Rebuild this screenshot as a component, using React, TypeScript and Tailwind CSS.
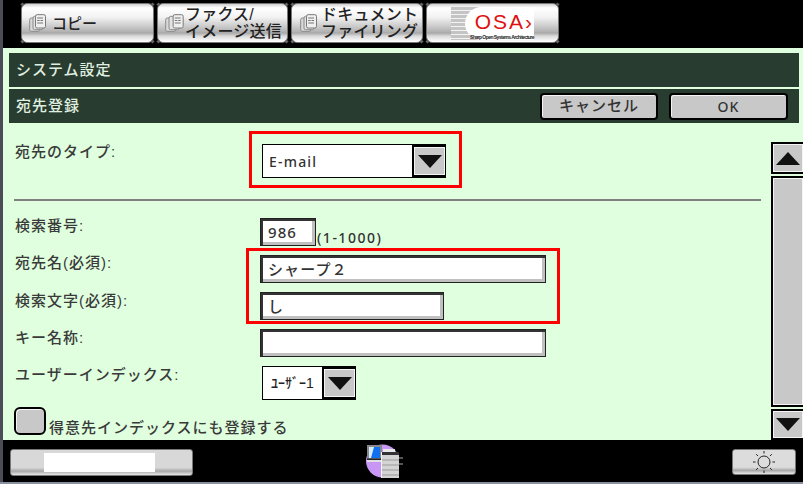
const font = "[font-family:'Liberation_Sans','Noto_Sans_CJK_JP',sans-serif]"

function DocIcon({ wide }: { wide?: boolean }) {
  return (
    <svg width="20" height="20" viewBox="0 0 24 24" className="shrink-0">
      <rect x="2" y="6" width="12" height="16" rx="2" fill="#d8d8d8" stroke="#8a8a8a" strokeWidth="1.2" />
      <rect x="6" y="4" width="12" height="16" rx="2" fill="#e2e2e2" stroke="#8a8a8a" strokeWidth="1.2" />
      <rect x={wide ? 11 : 9} y="2" width="12" height="16" rx="2" fill="#efefef" stroke="#7a7a7a" strokeWidth="1.2" />
      <path d={wide ? "M13 6h7M13 9h3M17 9h3M13 12h7" : "M11 6h7M11 9h3M15 9h3M11 12h7"} stroke="#777" strokeWidth="1.2" fill="none" />
    </svg>
  )
}

function Tab({ className, children }: { className: string; children: React.ReactNode }) {
  return (
    <div
      className={`relative flex h-[40px] items-center rounded-[6px] border border-[#777] bg-[linear-gradient(180deg,#cfcfcf_0%,#ffffff_10%,#f2f2f2_35%,#b4b4b4_72%,#a8a8a8_76%,#dcdcdc_85%,#ffffff_100%)] ${className}`}
    >
      <span className="absolute -top-px -left-px size-[3px] rotate-45 bg-[#666]" />
      <span className="absolute -top-px -right-px size-[3px] rotate-45 bg-[#666]" />
      <span className="absolute -bottom-px -left-px size-[3px] rotate-45 bg-[#666]" />
      <span className="absolute -right-px -bottom-px size-[3px] rotate-45 bg-[#666]" />
      {children}
    </div>
  )
}

function TabLabel({ children }: { children: React.ReactNode }) {
  return <div className="text-[16px] leading-[17px] font-medium tracking-[0.2px] whitespace-nowrap text-[#222]">{children}</div>
}

function Label({ children, className = "" }: { children: React.ReactNode; className?: string }) {
  return <div className={`pl-px text-[15px] leading-[18px] font-medium tracking-[1px] whitespace-nowrap text-[#3a3a3a] ${className}`}>{children}</div>
}

function Field({ value, className }: { value?: string; className: string }) {
  return (
    <div
      className={`flex h-[28px] items-center border border-[#222] bg-white pl-[7px] [font-family:'Noto_Sans','Noto_Sans_CJK_JP',sans-serif] text-[15px] font-medium tracking-[1.1px] text-[#333] shadow-[inset_2px_2px_0_#333,inset_-3px_-3px_0_#c0c0c0] ${className}`}
    >
      {value}
    </div>
  )
}

function GrayButton({ children, className = "" }: { children?: React.ReactNode; className?: string }) {
  return (
    <div className={`flex items-center justify-center border-2 border-black bg-[#c8c8c8] shadow-[inset_1px_1px_0_#f4f4f4] ${className}`}>
      {children}
    </div>
  )
}

function ArrowBox({ children, className = "" }: { children?: React.ReactNode; className?: string }) {
  return (
    <div className={`flex items-center justify-center border-2 border-r-0 border-black bg-[#c8c8c8] shadow-[inset_0_0_0_1px_#f4f4f4] ${className}`}>
      {children}
    </div>
  )
}

function Triangle({ up }: { up?: boolean }) {
  return (
    <svg width="24" height="13" viewBox="0 0 24 13">
      <path d={up ? "M12 0L24 13H0Z" : "M0 0H24L12 13Z"} fill="#111" />
    </svg>
  )
}

function DeviceIcon() {
  return (
    <svg width="38" height="36" viewBox="0 0 38 36">
      <circle cx="16.5" cy="18" r="16.5" fill="#c896f5" />
      <rect x="1" y="2" width="15" height="14" fill="#888" />
      <path d="M3 4h11v11H3z" fill="#1070f0" />
      <path d="M3 4h5l-3 11H3z" fill="#d8ecff" />
      <rect x="1" y="16" width="15" height="3" fill="#e0e0e0" />
      <rect x="1" y="15.5" width="15" height="1.5" fill="#222" />
      <rect x="15" y="9" width="18" height="26" fill="#d4d4d4" />
      <rect x="15" y="9" width="18" height="3" fill="#333" />
      <rect x="15" y="9" width="1" height="26" fill="#f4f4f4" />
      <path d="M16 17h17M16 22h17M16 27h17M16 32h17" stroke="#9a9a9a" strokeWidth="1" />
      <rect x="17" y="6" width="12" height="3" fill="#e8e8e8" />
      <rect x="33" y="14" width="4" height="2" fill="#555" />
      <rect x="33" y="20" width="4" height="2" fill="#555" />
    </svg>
  )
}

function SunIcon() {
  return (
    <svg width="22" height="22" viewBox="0 0 22 22" fill="none" stroke="#222" strokeWidth="1">
      <circle cx="11" cy="11" r="6" />
      <path d="M11 0v2.5M11 19.5V22M0 11h2.5M19.5 11H22M3.2 3.2l1.8 1.8M17 17l1.8 1.8M18.8 3.2L17 5M5 17l-1.8 1.8" />
    </svg>
  )
}

export default function App() {
  return (
    <div className={`flex h-[484px] w-[803px] flex-col overflow-hidden bg-black ${font}`}>
      <div className="flex h-[482px]">
        <div className="w-[3px] bg-[#4a4c58]" />
        <div className="flex w-[800px] flex-col">
          {/* top tabs */}
          <div className="flex h-[45px] shrink-0 gap-[3px] bg-black pt-[3px] pl-[18px]">
            <Tab className="w-[133px] gap-[4px] pl-[6px]">
              <DocIcon />
              <div className="text-[15px] leading-[17px] font-medium whitespace-nowrap text-[#222]">コピー</div>
            </Tab>
            <Tab className="w-[131px] gap-px pl-[6px]">
              <DocIcon wide />
              <TabLabel>
                ファクス/
                <br />
                イメージ送信
              </TabLabel>
            </Tab>
            <Tab className="w-[132px] gap-[2px] pl-[7px]">
              <DocIcon />
              <TabLabel>
                ドキュメント
                <br />
                ファイリング
              </TabLabel>
            </Tab>
            <Tab className="w-[133px] pl-[24px]">
              <div className="flex h-[33px] w-[83px] items-stretch bg-white">
                <div className="w-[34px] shrink-0 bg-[repeating-linear-gradient(180deg,#c4c4c4_0px,#c4c4c4_3px,#f4f4f4_3px,#f4f4f4_4px)]" />
                <div className="-ml-[20px] flex w-[69px] shrink-0 flex-col items-end rounded-l-[20px] bg-white">
                  <div className="mt-[3px] text-[21px] leading-[23px] font-normal tracking-[2px] text-[#e01010]">OSA›</div>
                  <div className="mt-px text-[5px] leading-[6px] font-bold tracking-[-0.55px] whitespace-nowrap text-[#222]">Sharp Open Systems Architecture</div>
                </div>
              </div>
            </Tab>
          </div>
          <div className="h-[3px] shrink-0 bg-black" />

          {/* main panel */}
          <div className="flex h-[392px] shrink-0 flex-col overflow-hidden bg-[#e0ffdf]">
            <div className="flex shrink-0 flex-col gap-[2px] pt-[5px] pr-[4px] pl-[6px]">
              <div className="flex h-[34px] items-center bg-[#283c2f] pl-[7px] text-[15px] font-medium tracking-[1px] text-[#e0f0e0]">
                システム設定
              </div>
              <div className="flex h-[34px] items-center bg-[#283c2f] pl-[7px] text-[15px] font-medium tracking-[1px] text-[#e0f0e0]">
                <span className="flex-1">宛先登録</span>
                <GrayButton className="h-[27px] w-[118px] rounded-[4px] text-[15px] font-medium tracking-[1px] text-[#333]">キャンセル</GrayButton>
                <GrayButton className="mx-[11px] h-[27px] w-[119px] rounded-[4px] [font-family:'Noto_Sans',sans-serif] text-[14px] font-medium tracking-[1px] text-[#333]">OK</GrayButton>
              </div>
            </div>

            <div className="flex min-h-0 flex-1">
              <div className="w-[768px] shrink-0 pl-[11px]">
                <div className="mt-[8px] flex">
                  <div className="w-[235px] pt-[12px]">
                    <Label>宛先のタイプ:</Label>
                  </div>
                  <div className="h-[57px] w-[213px] border-[3px] border-[#ff0000] pt-[10px] pl-[10px]">
                    <div className="flex h-[34px] w-[184px] border border-black bg-white">
                      <div className="flex flex-1 items-center pl-[6px] [font-family:'Noto_Sans',sans-serif] text-[14px] font-medium tracking-[1.2px] text-[#333]">E-mail</div>
                      <ArrowBox className="h-full w-[33px]">
                        <Triangle />
                      </ArrowBox>
                    </div>
                  </div>
                </div>

                <div className="mt-[11px] h-[2px] w-[747px] bg-[#808080]" />

                <div className="mt-[17px] flex h-[28px]">
                  <Label className="-mt-px w-[246px]">検索番号:</Label>
                  <Field value="986" className="w-[56px]" />
                  <div className="mt-[10px] ml-px [font-family:'Noto_Sans',sans-serif] text-[14px] leading-[20px] font-medium tracking-[1.5px] text-[#333]">(1-1000)</div>
                </div>

                <div className="mt-[2px] flex">
                  <div className="w-[232px] pt-[6px]">
                    <Label>宛先名(必須):</Label>
                    <Label className="mt-[20px]">検索文字(必須):</Label>
                  </div>
                  <div className="h-[76px] w-[314px] border-[3px] border-[#ff0000] pt-[4px] pl-[11px]">
                    <Field value="シャープ２" className="w-[286px]" />
                    <Field value="し" className="mt-[9px] w-[184px]" />
                  </div>
                </div>

                <div className="mt-[5px] flex h-[28px]">
                  <Label className="w-[246px]">キー名称:</Label>
                  <Field className="w-[286px]" />
                </div>

                <div className="mt-[9px] flex h-[34px]">
                  <Label className="w-[248px]">ユーザーインデックス:</Label>
                  <div className="flex h-[34px] w-[94px] border border-black bg-white">
                    <div className="flex flex-1 items-center justify-center text-[14px] font-medium text-[#222]">ﾕｰｻﾞｰ1</div>
                    <ArrowBox className="h-full w-[33px]">
                      <Triangle />
                    </ArrowBox>
                  </div>
                </div>

                <div className="mt-[7px] flex h-[28px]">
                  <GrayButton className="h-[28px] w-[32px] rounded-[6px]" />
                  <div className="mt-[11px] ml-[3px] text-[15px] leading-[20px] font-medium tracking-[1px] whitespace-nowrap text-[#3a3a3a]">
                    得意先インデックスにも登録する
                  </div>
                </div>
              </div>

              {/* scrollbar */}
              <div className="flex w-[32px] shrink-0 flex-col gap-[2px] pt-[19px]">
                <ArrowBox className="h-[32px] w-full">
                  <Triangle up />
                </ArrowBox>
                <ArrowBox className="min-h-0 flex-1" />
                <ArrowBox className="h-[31px] w-full">
                  <Triangle />
                </ArrowBox>
              </div>
            </div>
          </div>

          {/* bottom bar */}
          <div className="flex min-h-0 flex-1 items-start bg-black">
            <div className="mt-[9px] ml-[7px] h-[27px] w-[183px] rounded-[3px] border border-[#777] bg-[linear-gradient(180deg,#d8d8d8_0%,#d8d8d8_70%,#a8a8a8_85%,#e8e8e8_100%)] pt-[3px] pl-[33px]">
              <div className="h-[19px] w-[111px] bg-white" />
            </div>
            <div className="mt-[3px] ml-[173px]">
              <DeviceIcon />
            </div>
            <div className="mt-[9px] ml-[328px] flex h-[26px] w-[64px] justify-center rounded-[3px] border border-[#777] bg-[linear-gradient(180deg,#dcdcdc_0%,#dcdcdc_72%,#a8a8a8_85%,#e8e8e8_100%)] pt-px">
              <SunIcon />
            </div>
          </div>
        </div>
      </div>
      <div className="h-[2px] shrink-0 bg-[#8a90a0]" />
    </div>
  )
}
